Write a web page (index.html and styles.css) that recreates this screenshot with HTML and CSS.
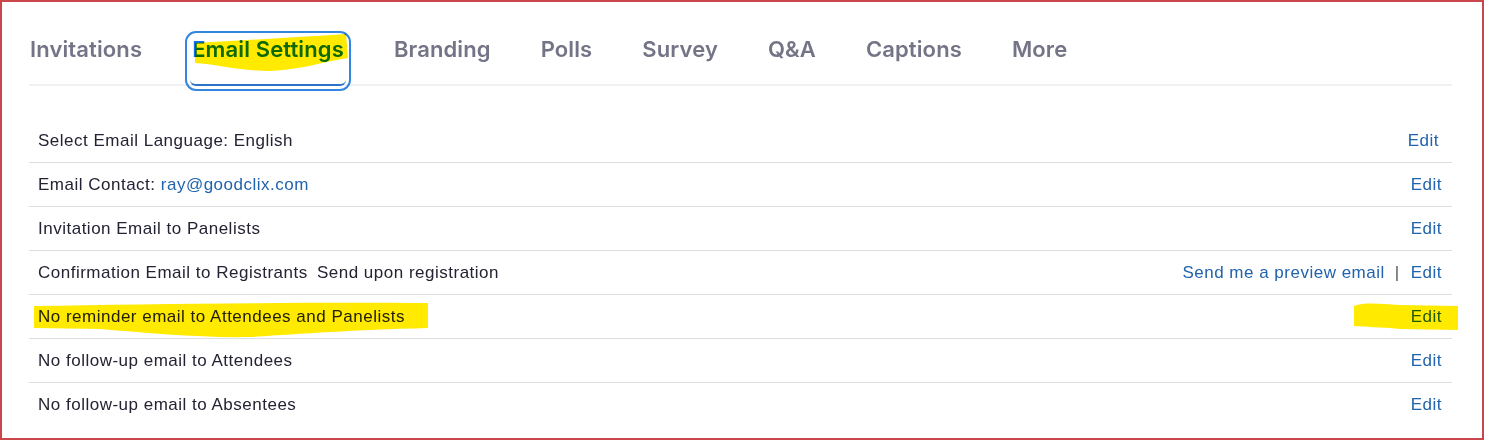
FILE: index.html
```html
<!DOCTYPE html>
<html lang="en">
<head>
<meta charset="utf-8">
<title>Email Settings</title>
<link rel="stylesheet" href="styles.css">
</head>
<body>
<div class="frame">
  <div class="panel">
    <nav class="tabs">
      <span class="tab">Invitations</span>
      <span class="tab tab--active">Email Settings</span>
      <span class="tab">Branding</span>
      <span class="tab">Polls</span>
      <span class="tab">Survey</span>
      <span class="tab">Q&amp;A</span>
      <span class="tab">Captions</span>
      <span class="tab">More</span>
    </nav>
    <ul class="rows">
      <li class="row">
        <span class="label">Select Email Language: English</span>
        <span class="actions actions--first"><a class="link">Edit</a></span>
      </li>
      <li class="row">
        <span class="label">Email Contact: <a class="link">ray@goodclix.com</a></span>
        <span class="actions"><a class="link">Edit</a></span>
      </li>
      <li class="row">
        <span class="label">Invitation Email to Panelists</span>
        <span class="actions"><a class="link">Edit</a></span>
      </li>
      <li class="row">
        <span class="label">Confirmation Email to Registrants <span class="note">Send upon registration</span></span>
        <span class="actions"><a class="link">Send me a preview email</a><span class="sep">|</span><a class="link">Edit</a></span>
      </li>
      <li class="row">
        <span class="label">No reminder email to Attendees and Panelists</span>
        <span class="actions"><a class="link">Edit</a></span>
      </li>
      <li class="row">
        <span class="label">No follow-up email to Attendees</span>
        <span class="actions"><a class="link">Edit</a></span>
      </li>
      <li class="row">
        <span class="label">No follow-up email to Absentees</span>
        <span class="actions"><a class="link">Edit</a></span>
      </li>
    </ul>
  </div>
  <svg class="marker" width="1486" height="440" viewBox="0 0 1486 440" aria-hidden="true">
    <path d="M195,43 C250,40 300,37 346,34 L348,58 C322,62 300,70 270,71 C240,71 215,64 195,63 Z"/>
    <path d="M34,306 C150,304 300,302 428,303 L428,328 C350,330 300,334 250,337 C200,338 150,333 100,329 L34,328 Z"/>
    <path d="M1354,306 C1365,302 1380,304 1400,305 L1458,306 L1458,330 L1400,329 C1380,327 1365,327 1354,326 Z"/>
  </svg>
</div>
</body>
</html>
```

FILE: styles.css
```css
html, body {
  margin: 0;
  padding: 0;
  background: #ffffff;
}

.frame {
  position: relative;
  width: 1484px;
  height: 440px;
  box-sizing: border-box;
  border: 2px solid #c9474a;
  background: #ffffff;
  overflow: hidden;
}

.panel {
  padding: 32px 0 0 27px;
  width: 1423px;
}

.tabs {
  display: flex;
  align-items: flex-end;
  gap: 46px;
  border-bottom: 2px solid #f1f1f3;
  height: 50px;
}

.tab {
  display: block;
  font-family: Inter, "Liberation Sans", sans-serif;
  font-weight: 600;
  font-size: 22px;
  line-height: 26px;
  letter-spacing: 0.12px;
  color: #747487;
  padding: 0 2px 22px;
  border-bottom: 2px solid transparent;
  margin-bottom: -2px;
  white-space: nowrap;
}

.tab:first-child {
  margin-left: -1px;
}

.tab--active {
  color: #0e72ed;
  border-bottom-color: #2b74c7;
  outline: 2px solid #3386e0;
  outline-offset: 3px;
  border-radius: 6px;
}

.rows {
  list-style: none;
  margin: 33px 0 0;
  padding: 0;
}

.row {
  display: flex;
  align-items: center;
  justify-content: space-between;
  height: 43px;
  border-bottom: 1px solid #dedede;
  padding: 0 10px 0 9px;
  font-family: "Liberation Sans", Arial, sans-serif;
  font-size: 17px;
  letter-spacing: 0.5px;
  color: #232333;
}

.row:last-child {
  border-bottom: none;
}

.note {
  margin-left: 4px;
}

.actions {
  display: flex;
  align-items: center;
}

.actions--first {
  margin-right: 3px;
}

.link {
  color: #2163ad;
  text-decoration: none;
}

.sep {
  color: #555555;
  margin: 0 11px 0 10px;
}

.marker {
  position: absolute;
  left: -2px;
  top: -2px;
  pointer-events: none;
  mix-blend-mode: multiply;
}

.marker path {
  fill: #ffea00;
}
```
